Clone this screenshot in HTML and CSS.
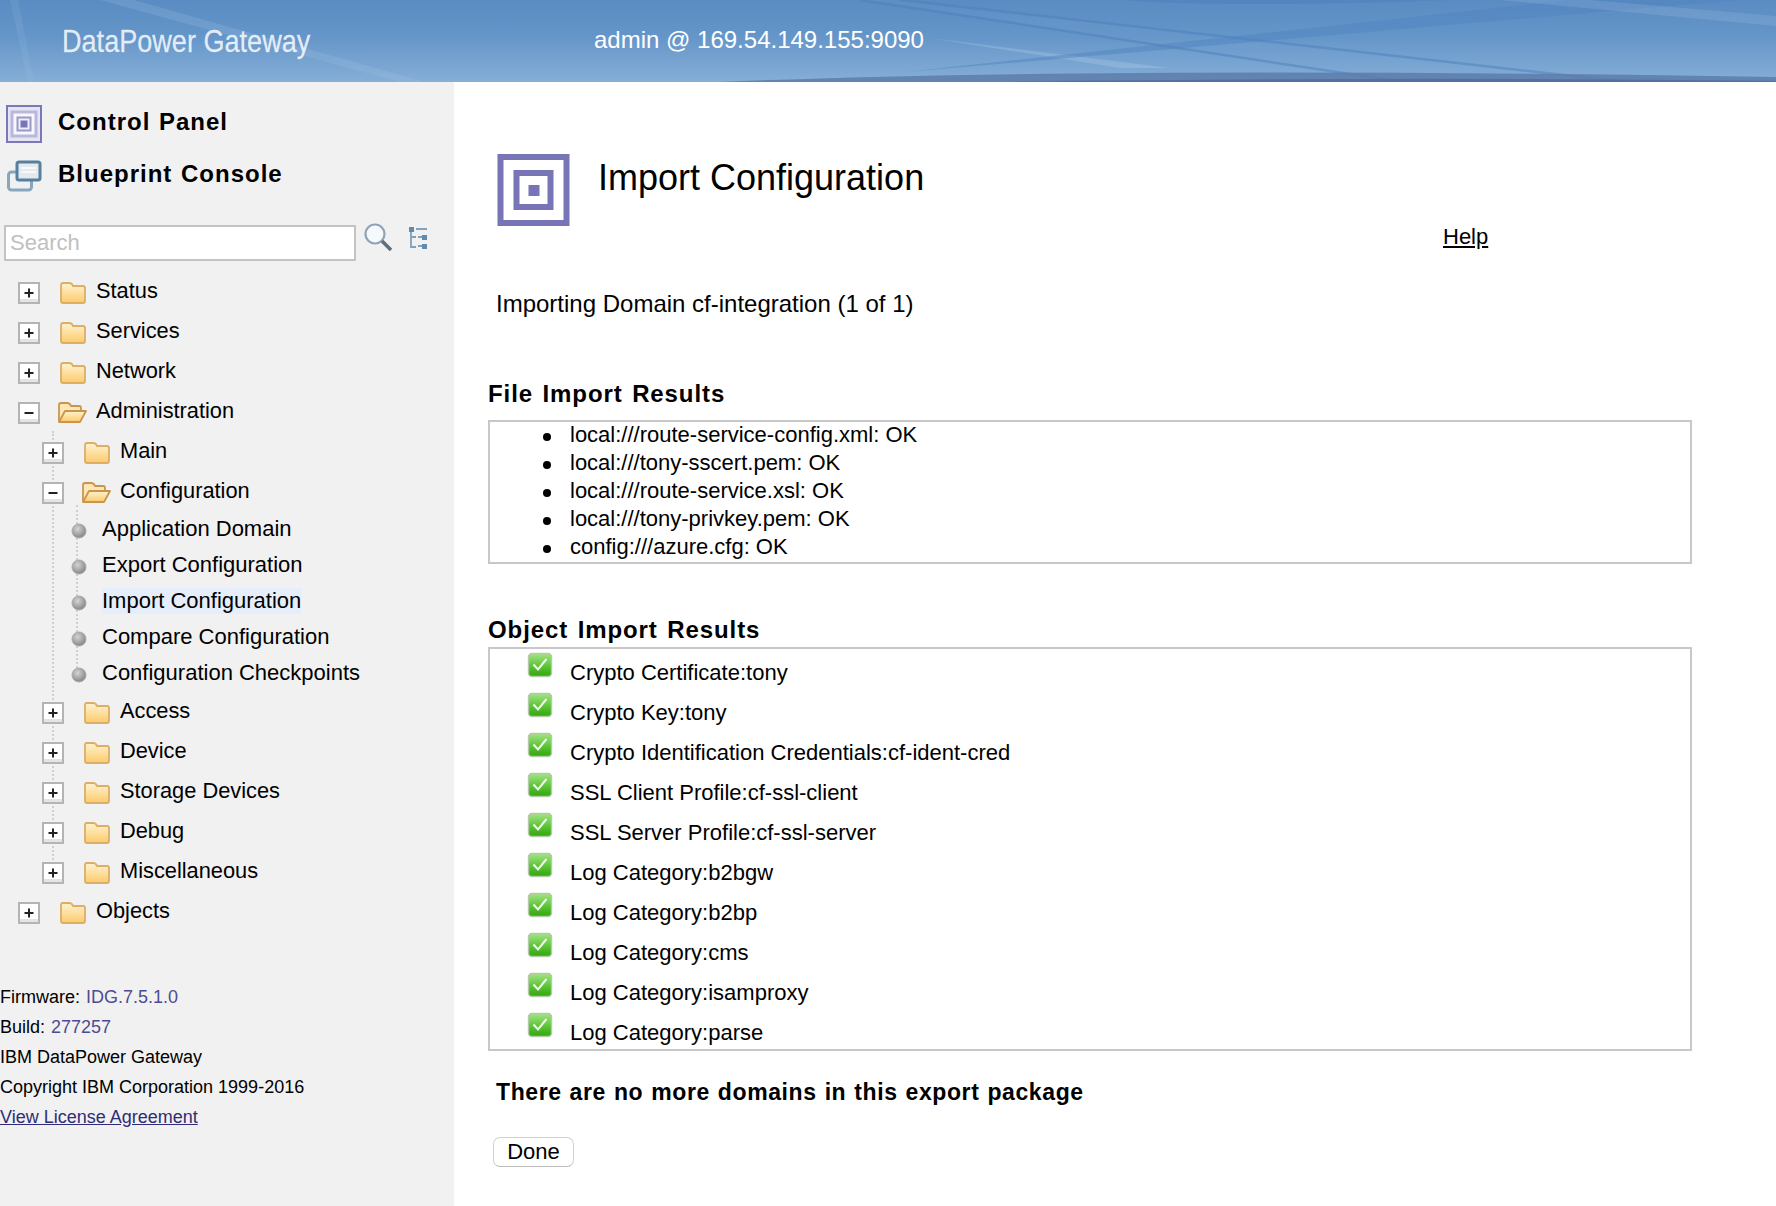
FILE: index.html
```html
<!DOCTYPE html>
<html lang="en">
<head>
<meta charset="utf-8">
<title>Import Configuration</title>
<link rel="stylesheet" href="styles.css">
</head>
<body>
<svg class="defs" width="0" height="0" aria-hidden="true">
  <defs>
    <linearGradient id="fold" x1="0" y1="0" x2="0" y2="1"><stop offset="0" stop-color="#fff3d0"/><stop offset="1" stop-color="#fcca6a"/></linearGradient>
    <linearGradient id="chk" x1="0" y1="0" x2="0" y2="1"><stop offset="0" stop-color="#a4e486"/><stop offset=".5" stop-color="#62c83c"/><stop offset="1" stop-color="#2fa50c"/></linearGradient>
    <radialGradient id="dot" cx=".4" cy=".35" r=".7"><stop offset="0" stop-color="#d4d4d4"/><stop offset="1" stop-color="#808080"/></radialGradient>
    <symbol id="i-closed" viewBox="-1 1 30 24"><path d="M3 21V5q0-2 2-2h6q3 0 4 3h10q2 0 2 2v13q0 2-2 2H5q-2 0-2-2z" fill="url(#fold)" stroke="#dcae66" stroke-width="1.800"/></symbol>
    <symbol id="i-open" viewBox="0 1 30 24"><path d="M2 21V5q0-2 2-2h6q3 0 4 3h8q2 0 2 2v3" fill="#fde7b4" stroke="#c9954c" stroke-width="1.800"/><path d="M2 22l6-11h21l-6 11z" fill="url(#fold)" stroke="#c9954c" stroke-width="1.800" stroke-linejoin="round"/></symbol>
    <symbol id="i-plus" viewBox="0 0 22 22"><rect x="1" y="1" width="20" height="20" fill="#fff" stroke="#b4b4b4" stroke-width="2"/><path d="M2 17h18v3H2z" fill="#e4e4e4"/><path d="M6.500 11h9M11 6.500v9" stroke="#222" stroke-width="2"/></symbol>
    <symbol id="i-minus" viewBox="0 0 22 22"><rect x="1" y="1" width="20" height="20" fill="#fff" stroke="#b4b4b4" stroke-width="2"/><path d="M2 17h18v3H2z" fill="#e4e4e4"/><path d="M6.500 11h9" stroke="#222" stroke-width="2"/></symbol>
    <symbol id="i-dot" viewBox="0 0 16 16"><circle cx="8" cy="8" r="7" fill="url(#dot)" stroke="#aaa" stroke-width="1"/></symbol>
    <symbol id="i-check" viewBox="0 0 26 26"><rect x="1.500" y="1.500" width="23" height="23" rx="3.500" fill="url(#chk)" stroke="#b6c9ae" stroke-width="1.400"/><path d="M6.500 12.500l4.500 5L19.500 7" fill="none" stroke="#eefae8" stroke-width="2"/></symbol>
  </defs>
</svg>

<header class="topbar">
  <svg class="swoosh" viewBox="0 0 1776 82" preserveAspectRatio="none" aria-hidden="true">
    <path d="M100 0h34L425 82h-25z" fill="#a6c6e4" opacity=".2"/>
    <path d="M10 0h8L34 82h-6z" fill="#a6c6e4" opacity=".14"/>
    <path d="M930 38L1170 68 1120 68z" fill="#b4cfe8" opacity=".3"/>
    <path d="M860 0L1403 82H1626L900 0z" fill="#7aa6d2" opacity=".12"/>
    <path d="M860 0L1403 82" fill="none" stroke="#4c7fba" stroke-width="2.500" opacity=".5"/>
    <path d="M900 0L1626 82" fill="none" stroke="#4c7fba" stroke-width="2.500" opacity=".5"/>
    <path d="M905 72L1738 0H1570z" fill="#4f84bf" opacity=".5"/>
    <path d="M1123 0Q1230 8 1450 0z" fill="#4c7fba" opacity=".5"/>
    <path d="M1500 0L1776 26v-10L1590 0z" fill="#a8c7e4" opacity=".2"/>
    <path d="M720 82Q1100 66 1776 77v5z" fill="#5c7caa" opacity=".85"/>
    <path d="M1000 82Q1400 76 1776 81v1z" fill="#4c6a9a" opacity=".7"/>
  </svg>
  <span class="brand">DataPower Gateway</span>
  <span class="user">admin @ 169.54.149.155:9090</span>
</header>

<div class="layout">
  <aside class="sidebar">
    <a class="console">
      <svg class="console-icon" viewBox="0 0 36 38" aria-hidden="true"><rect x="1" y="1" width="34" height="36" fill="#e5e4f2" stroke="#7b78b9" stroke-width="2"/><rect x="6" y="7" width="24" height="24" fill="#f8f8fc" stroke="#b9b8dc" stroke-width="3"/><rect x="11.500" y="12.500" width="13" height="13" fill="#eeeef7" stroke="#9a98ca" stroke-width="2"/><rect x="14.500" y="15.500" width="7" height="7" fill="#7775b5"/></svg>
      <span>Control Panel</span>
    </a>
    <a class="console">
      <svg class="console-icon" viewBox="0 0 36 38" aria-hidden="true"><rect x="2.500" y="15" width="23" height="18" rx="3" fill="#eef2f5" stroke="#8aa6bb" stroke-width="3"/><rect x="11" y="5" width="23" height="18" rx="2" fill="#e6e9ec" stroke="#55809f" stroke-width="3"/><path d="M15 11h15M15 15h15" stroke="#f7f8f9" stroke-width="2"/></svg>
      <span>Blueprint Console</span>
    </a>

    <div class="searchbar">
      <input class="search" type="text" placeholder="Search">
      <svg class="search-icon" viewBox="0 0 30 30" aria-hidden="true"><circle cx="12" cy="12" r="9.500" fill="#f6f9fb" stroke="#8ea3b5" stroke-width="2.200"/><path d="M19 19l9 9" stroke="#5d6f7f" stroke-width="3.500"/></svg>
      <svg class="tree-icon" viewBox="0 0 20 24" aria-hidden="true"><path d="M3 3v18h5M3 11h5M8 3h11M10 11h9M10 20h9" fill="none" stroke="#7fa2bd" stroke-width="1.800"/><rect x="1" y="1" width="5" height="5" fill="#5f8cae"/><rect x="14" y="9" width="5" height="5" fill="#5f8cae"/><rect x="14" y="18" width="5" height="5" fill="#5f8cae"/></svg>
    </div>

    <nav class="tree">
      <span class="guide guide-one"></span>
      <span class="guide guide-two"></span>
      <div class="node"><svg class="box"><use href="#i-plus"/></svg><svg class="folder"><use href="#i-closed"/></svg><span>Status</span></div>
      <div class="node"><svg class="box"><use href="#i-plus"/></svg><svg class="folder"><use href="#i-closed"/></svg><span>Services</span></div>
      <div class="node"><svg class="box"><use href="#i-plus"/></svg><svg class="folder"><use href="#i-closed"/></svg><span>Network</span></div>
      <div class="node"><svg class="box"><use href="#i-minus"/></svg><svg class="folder"><use href="#i-open"/></svg><span>Administration</span></div>
      <div class="node sub"><svg class="box"><use href="#i-plus"/></svg><svg class="folder"><use href="#i-closed"/></svg><span>Main</span></div>
      <div class="node sub"><svg class="box"><use href="#i-minus"/></svg><svg class="folder"><use href="#i-open"/></svg><span>Configuration</span></div>
      <div class="leaf"><svg class="bullet"><use href="#i-dot"/></svg><span>Application Domain</span></div>
      <div class="leaf"><svg class="bullet"><use href="#i-dot"/></svg><span>Export Configuration</span></div>
      <div class="leaf"><svg class="bullet"><use href="#i-dot"/></svg><span class="current">Import Configuration</span></div>
      <div class="leaf"><svg class="bullet"><use href="#i-dot"/></svg><span>Compare Configuration</span></div>
      <div class="leaf"><svg class="bullet"><use href="#i-dot"/></svg><span>Configuration Checkpoints</span></div>
      <div class="node sub"><svg class="box"><use href="#i-plus"/></svg><svg class="folder"><use href="#i-closed"/></svg><span>Access</span></div>
      <div class="node sub"><svg class="box"><use href="#i-plus"/></svg><svg class="folder"><use href="#i-closed"/></svg><span>Device</span></div>
      <div class="node sub"><svg class="box"><use href="#i-plus"/></svg><svg class="folder"><use href="#i-closed"/></svg><span>Storage Devices</span></div>
      <div class="node sub"><svg class="box"><use href="#i-plus"/></svg><svg class="folder"><use href="#i-closed"/></svg><span>Debug</span></div>
      <div class="node sub"><svg class="box"><use href="#i-plus"/></svg><svg class="folder"><use href="#i-closed"/></svg><span>Miscellaneous</span></div>
      <div class="node"><svg class="box"><use href="#i-plus"/></svg><svg class="folder"><use href="#i-closed"/></svg><span>Objects</span></div>
    </nav>

    <footer class="about">
      <p>Firmware: <span class="val">IDG.7.5.1.0</span></p>
      <p>Build: <span class="val">277257</span></p>
      <p>IBM DataPower Gateway</p>
      <p>Copyright IBM Corporation 1999-2016</p>
      <p><a class="license" href="#">View License Agreement</a></p>
    </footer>
  </aside>

  <main class="content">
    <div class="title-row">
      <svg class="title-icon" viewBox="0 0 72 72" aria-hidden="true"><rect x="3" y="3" width="66" height="66" fill="#fff" stroke="#7775b5" stroke-width="6"/><rect x="19" y="19" width="34" height="34" fill="#fff" stroke="#7775b5" stroke-width="6"/><rect x="31" y="31" width="11" height="11" fill="#7775b5"/></svg>
      <h1>Import Configuration</h1>
    </div>
    <a class="help" href="#">Help</a>
    <p class="importing">Importing Domain cf-integration (1 of 1)</p>

    <h2 class="section file-head">File Import Results</h2>
    <ul class="box-list">
      <li>local:///route-service-config.xml: OK</li>
      <li>local:///tony-sscert.pem: OK</li>
      <li>local:///route-service.xsl: OK</li>
      <li>local:///tony-privkey.pem: OK</li>
      <li>config:///azure.cfg: OK</li>
    </ul>

    <h2 class="section object-head">Object Import Results</h2>
    <div class="objects">
      <div class="obj"><svg class="check"><use href="#i-check"/></svg><span>Crypto Certificate:tony</span></div>
      <div class="obj"><svg class="check"><use href="#i-check"/></svg><span>Crypto Key:tony</span></div>
      <div class="obj"><svg class="check"><use href="#i-check"/></svg><span>Crypto Identification Credentials:cf-ident-cred</span></div>
      <div class="obj"><svg class="check"><use href="#i-check"/></svg><span>SSL Client Profile:cf-ssl-client</span></div>
      <div class="obj"><svg class="check"><use href="#i-check"/></svg><span>SSL Server Profile:cf-ssl-server</span></div>
      <div class="obj"><svg class="check"><use href="#i-check"/></svg><span>Log Category:b2bgw</span></div>
      <div class="obj"><svg class="check"><use href="#i-check"/></svg><span>Log Category:b2bp</span></div>
      <div class="obj"><svg class="check"><use href="#i-check"/></svg><span>Log Category:cms</span></div>
      <div class="obj"><svg class="check"><use href="#i-check"/></svg><span>Log Category:isamproxy</span></div>
      <div class="obj"><svg class="check"><use href="#i-check"/></svg><span>Log Category:parse</span></div>
    </div>

    <p class="notice">There are no more domains in this export package</p>
    <button class="done" type="button">Done</button>
  </main>
</div>
</body>
</html>
```
FILE: styles.css
```css
* { box-sizing: border-box; }
html, body { margin: 0; height: 1206px; overflow: hidden; background: #fff; }
body { font-family: "Liberation Sans", Arial, sans-serif; font-size: 22px; color: #000; display: flex; flex-direction: column; }
.defs { position: absolute; }

.topbar { position: relative; flex: 0 0 82px; height: 82px; background: linear-gradient(#5a8bc2 0%, #6596c9 45%, #86aed7 100%); display: flex; align-items: center; overflow: hidden; }
.swoosh { position: absolute; inset: 0; width: 100%; height: 100%; }
.brand { position: relative; flex: 0 0 594px; padding-left: 62px; font-size: 32px; line-height: 82px; color: rgba(255,255,255,.82); -webkit-text-stroke: .3px rgba(255,255,255,.6); transform: scaleX(.846); transform-origin: 62px 50%; white-space: nowrap; }
.user { position: relative; font-size: 24px; color: #fff; margin-top: -2px; }

.layout { flex: 1; display: flex; min-height: 0; }
.sidebar { flex: 0 0 454px; background: #f1f1f1; padding-top: 14px; }

.console { display: flex; align-items: center; height: 52px; padding-left: 6px; font-size: 24px; font-weight: 700; letter-spacing: 1px; word-spacing: 1px; }
.console-icon { flex: 0 0 36px; width: 36px; height: 38px; margin: 4px 16px 0 0; }

.searchbar { display: flex; align-items: flex-start; margin-top: 25px; padding-left: 4px; height: 46px; }
.search { width: 352px; height: 36px; border: 2px solid #c4c4c4; background: #fff; padding: 0 4px; font: 22px "Liberation Sans", Arial, sans-serif; }
.search::placeholder { color: #c0c0c0; opacity: 1; }
.search-icon { width: 30px; height: 30px; margin: -3px 0 0 7px; }
.tree-icon { width: 20px; height: 24px; margin: 1px 0 0 15px; }

.tree { position: relative; }
.guide { position: absolute; width: 0; border-left: 2px dotted #cfcfcf; }
.guide-one { left: 52px; top: 160px; height: 440px; }
.guide-two { left: 76px; top: 234px; height: 167px; }
.node { position: relative; display: flex; align-items: center; height: 40px; padding-left: 18px; font-size: 21.800px; }
.node.sub { padding-left: 42px; }
.box { flex: 0 0 22px; width: 22px; height: 22px; margin-top: 4px; }
.folder { flex: 0 0 30px; width: 30px; height: 24px; margin: 4px 9px 0 17px; }
.leaf { position: relative; display: flex; align-items: center; height: 36px; padding-left: 71px; font-size: 22px; }
.bullet { flex: 0 0 16px; width: 16px; height: 16px; margin: 4px 15px 0 0; }
.current { background: #e6edfb; }

.about { margin-top: 51px; font-size: 18px; line-height: 30px; }
.about p { margin: 0; white-space: nowrap; }
.val { color: #4e4b93; margin-left: 1px; }
.license { color: #2f2c78; }

.content { flex: 1; min-width: 0; padding: 72px 0 0 34px; }
.title-row { display: flex; height: 70px; padding-left: 9px; }
.title-icon { flex: 0 0 73px; width: 73px; height: 72px; }
h1 { margin: 2px 0 0 28px; font-size: 36px; font-weight: 400; line-height: 44px; }
.help { display: block; width: max-content; margin-left: 955px; color: #000; font-size: 22px; line-height: 26px; }
.importing { margin: 40px 0 0 8px; font-size: 24px; line-height: 28px; }
.section { margin: 0; font-size: 24px; font-weight: 700; line-height: 28px; letter-spacing: .9px; word-spacing: 2px; }
.file-head { margin-top: 62px; margin-bottom: 12px; }
.object-head { margin-top: 52px; margin-bottom: 3px; }
.box-list { width: 1204px; margin: 0; border: 2px solid #c8c8c8; padding: 0 0 1px 80px; line-height: 28px; list-style: none; }
.box-list li:first-child { margin-top: -1px; }
.box-list li::before { content: ""; display: inline-block; width: 8px; height: 8px; margin: 0 19px 1px -27px; border-radius: 50%; background: #000; }
.objects { width: 1204px; border: 2px solid #c8c8c8; padding-left: 37px; }
.obj { display: flex; align-items: flex-start; height: 40px; padding-top: 10px; line-height: 28px; }
.check { flex: 0 0 26px; width: 26px; height: 26px; margin: -7px 17px 0 0; }
.notice { margin: 27px 0 0 8px; font-size: 23px; font-weight: 700; line-height: 28px; letter-spacing: .6px; word-spacing: 1px; }
.done { display: block; width: 81px; height: 30px; margin: 31px 0 0 5px; padding: 0; border: 1px solid #d2d2d2; border-bottom-color: #bcbcbc; border-radius: 7px; background: #fff; font: 22px "Liberation Sans", Arial, sans-serif; color: #000; }
```
